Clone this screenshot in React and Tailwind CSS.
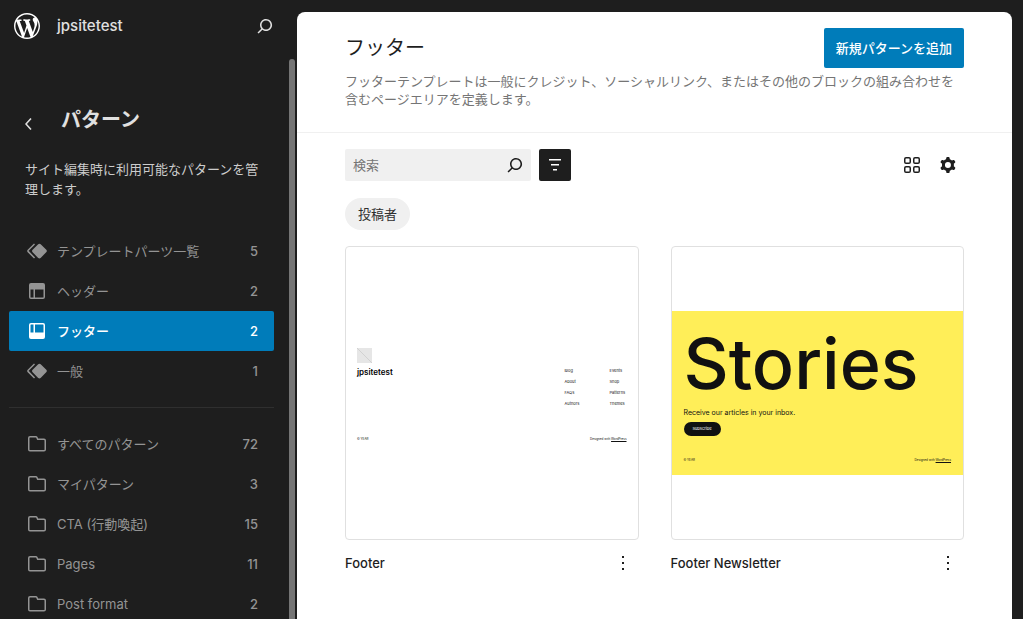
import React, { useState } from 'react';
import clsx from 'clsx';

const ICONS = {
  search:
    'M13 5c-3.3 0-6 2.7-6 6 0 1.4.5 2.7 1.3 3.7l-3.8 3.8 1.1 1.1 3.8-3.8c1 .8 2.3 1.3 3.7 1.3 3.3 0 6-2.7 6-6S16.3 5 13 5zm0 10.5c-2.5 0-4.5-2-4.5-4.5s2-4.5 4.5-4.5 4.5 2 4.5 4.5-2 4.5-4.5 4.5z',
  chevronLeft: 'M14.6 7l-1.2-1L8 12l5.4 6 1.2-1-4.6-5z',
  symbol:
    'M21.3 10.8l-5.6-5.6c-.7-.7-1.8-.7-2.5 0l-5.6 5.6c-.7.7-.7 1.8 0 2.5l5.6 5.6c.3.3.8.5 1.2.5s.9-.2 1.2-.5l5.6-5.6c.8-.7.8-1.9.1-2.5zm-17.6 1L10 5.5l-1-1-6.3 6.3c-.7.7-.7 1.8 0 2.5L9 19.5l1.1-1.1-6.3-6.3c-.2 0-.2-.2-.1-.3z',
  header:
    'M18.5 10.5H10v8h8a.5.5 0 00.5-.5v-7.5zm-10 0h-3V18a.5.5 0 00.5.5h2.5v-8zM6 4h12a2 2 0 012 2v12a2 2 0 01-2 2H6a2 2 0 01-2-2V6a2 2 0 012-2z',
  footer:
    'M18 5.5h-8v8h8.5V6a.5.5 0 00-.5-.5zm-9.5 8h-3V6a.5.5 0 01.5-.5h2.5v8zM6 4h12a2 2 0 012 2v12a2 2 0 01-2 2H6a2 2 0 01-2-2V6a2 2 0 012-2z',
  file: 'M12.848 8a1 1 0 01-.914-.594l-.723-1.63a.5.5 0 00-.447-.276H5a.5.5 0 00-.5.5v11.5a.5.5 0 00.5.5h14a.5.5 0 00.5-.5v-9A.5.5 0 0019 8h-6.152zm.612-1.5a.5.5 0 01-.462-.31l-.445-1.084A2 2 0 0010.763 4H5a2 2 0 00-2 2v11.5a2 2 0 002 2h14a2 2 0 002-2v-9a2 2 0 00-2-2h-5.54z',
  filter: 'M10 17.5h4V16h-4v1.5zM6 6v1.5h12V6H6zm2 6.5h8V11H8v1.5z',
  grid: 'M6 5.5h3a.5.5 0 01.5.5v3a.5.5 0 01-.5.5H6a.5.5 0 01-.5-.5V6a.5.5 0 01.5-.5zM4 6a2 2 0 012-2h3a2 2 0 012 2v3a2 2 0 01-2 2H6a2 2 0 01-2-2V6zm11-.5h3a.5.5 0 01.5.5v3a.5.5 0 01-.5.5h-3a.5.5 0 01-.5-.5V6a.5.5 0 01.5-.5zM13 6a2 2 0 012-2h3a2 2 0 012 2v3a2 2 0 01-2 2h-3a2 2 0 01-2-2V6zm5 8.5h-3a.5.5 0 00-.5.5v3a.5.5 0 00.5.5h3a.5.5 0 00.5-.5v-3a.5.5 0 00-.5-.5zM15 13a2 2 0 00-2 2v3a2 2 0 002 2h3a2 2 0 002-2v-3a2 2 0 00-2-2h-3zm-9 1.5h3a.5.5 0 01.5.5v3a.5.5 0 01-.5.5H6a.5.5 0 01-.5-.5v-3a.5.5 0 01.5-.5zM4 15a2 2 0 012-2h3a2 2 0 012 2v3a2 2 0 01-2 2H6a2 2 0 01-2-2v-3z',
  cog: 'M10.289 4.836A1 1 0 0111.275 4h1.306a1 1 0 01.987.836l.244 1.466c.787.26 1.503.679 2.108 1.218l1.393-.522a1 1 0 011.216.437l.653 1.13a1 1 0 01-.23 1.273l-1.148.944a6.025 6.025 0 010 2.435l1.149.946a1 1 0 01.23 1.272l-.653 1.13a1 1 0 01-1.216.437l-1.394-.522c-.605.54-1.32.958-2.108 1.218l-.244 1.466a1 1 0 01-.987.836h-1.306a1 1 0 01-.986-.836l-.244-1.466a5.995 5.995 0 01-2.108-1.218l-1.394.522a1 1 0 01-1.217-.436l-.653-1.131a1 1 0 01.23-1.272l1.149-.946a6.026 6.026 0 010-2.435l-1.148-.944a1 1 0 01-.23-1.272l.653-1.131a1 1 0 011.217-.437l1.393.522a5.994 5.994 0 012.108-1.218l.244-1.466zM14.929 12a3 3 0 11-6 0 3 3 0 016 0z',
  more: 'M13 19h-2v-2h2v2zm0-6h-2v-2h2v2zm0-6h-2V5h2v2z',
};

const TEMPLATE_PARTS = [
  { icon: 'symbol', label: 'テンプレートパーツ一覧', count: 5 },
  { icon: 'header', label: 'ヘッダー', count: 2 },
  { icon: 'footer', label: 'フッター', count: 2 },
  { icon: 'symbol', label: '一般', count: 1 },
];

const PATTERNS = [
  { icon: 'file', label: 'すべてのパターン', count: 72 },
  { icon: 'file', label: 'マイパターン', count: 3 },
  { icon: 'file', label: 'CTA (行動喚起)', count: 15 },
  { icon: 'file', label: 'Pages', count: 11 },
  { icon: 'file', label: 'Post format', count: 2 },
];

const FOOTER_LINKS = [
  ['Blog', 'About', 'FAQs', 'Authors'],
  ['Events', 'Shop', 'Patterns', 'Themes'],
];

const Icon = ({ name, className = 'h-6 w-6' }) => (
  <svg viewBox="0 0 24 24" className={clsx('shrink-0 fill-current', className)} aria-hidden="true">
    <path fillRule="evenodd" clipRule="evenodd" d={ICONS[name]} />
  </svg>
);

const WordPressLogo = () => (
  <svg viewBox="0 0 20 20" className="h-[26px] w-[26px] shrink-0 fill-white" aria-hidden="true">
    <path d="M20 10c0-5.51-4.49-10-10-10C4.48 0 0 4.49 0 10c0 5.52 4.48 10 10 10 5.51 0 10-4.48 10-10zM7.78 15.37L4.37 6.22c.55-.02 1.17-.08 1.17-.08.5-.06.44-1.13-.06-1.11 0 0-1.45.11-2.37.11-.18 0-.37 0-.58-.01C4.12 2.69 6.87 1.11 10 1.11c2.33 0 4.45.87 6.05 2.34-.68-.11-1.65.39-1.65 1.58 0 .74.45 1.36.9 2.1.35.61.55 1.36.55 2.46 0 1.49-1.4 5-1.4 5l-3.03-8.37c.54-.02.82-.17.82-.17.5-.05.44-1.25-.06-1.22 0 0-1.44.12-2.38.12-.87 0-2.33-.12-2.33-.12-.5-.03-.56 1.2-.06 1.22l.92.08 1.26 3.41zM17.41 10c.24-.64.74-1.87.43-4.25.7 1.29 1.05 2.71 1.05 4.25 0 3.29-1.73 6.24-4.4 7.78.97-2.59 1.94-5.2 2.92-7.78zM6.1 18.09C3.12 16.65 1.11 13.53 1.11 10c0-1.3.23-2.48.72-3.59C3.25 10.3 4.67 14.2 6.1 18.09zm4.03-6.63l2.58 6.98c-.86.29-1.76.45-2.71.45-.79 0-1.57-.11-2.29-.33.81-2.38 1.62-4.74 2.42-7.1z" />
  </svg>
);

const NavList = ({ items, active, onSelect }) => (
  <ul>
    {items.map((item) => {
      const isActive = item.label === active;
      return (
        <li key={item.label}>
          <a
            href="#"
            onClick={() => onSelect(item.label)}
            aria-current={isActive ? 'page' : undefined}
            className={clsx(
              'flex h-10 items-center gap-2 rounded-xs px-4',
              isActive ? 'bg-[#007cba] font-medium text-white' : 'text-[#949494]'
            )}
          >
            <Icon name={item.icon} />
            <span className="grow">{item.label}</span>
            <span className="font-medium">{item.count}</span>
          </a>
        </li>
      );
    })}
  </ul>
);

const Sidebar = () => {
  const [active, setActive] = useState('フッター');

  return (
    <aside className="flex w-[297px] shrink-0 flex-col">
      <div className="flex h-[59px] shrink-0 items-start pt-[10px] pr-5 pl-[14px]">
        <a href="#" className="flex h-8 grow items-center gap-[17px]">
          <WordPressLogo />
          <span className="text-[15px] font-medium text-[#e0e0e0]">jpsitetest</span>
        </a>
        <button type="button" aria-label="コマンドパレットを開く" className="flex h-8 items-center text-[#e0e0e0]">
          <Icon name="search" />
        </button>
      </div>
      <div className="flex min-h-0 grow">
        <div className="grow overflow-hidden pr-[15px] pl-[9px]">
          <div className="flex items-center gap-5 px-2 pt-[45px]">
            <button type="button" aria-label="戻る" className="flex h-8 w-6 items-end text-[#e0e0e0]">
              <Icon name="chevronLeft" />
            </button>
            <h1 className="text-xl leading-8 font-bold text-[#e0e0e0]">パターン</h1>
          </div>
          <p className="pt-[23px] pr-3 pl-4 leading-5 text-[#cccccc]">
            サイト編集時に利用可能なパターンを管理します。
          </p>
          <nav className="pt-8">
            <NavList items={TEMPLATE_PARTS} active={active} onSelect={setActive} />
            <hr className="my-4 border-[#2f2f2f]" />
            <NavList items={PATTERNS} active={active} onSelect={setActive} />
          </nav>
        </div>
        {/* scrollbar thumb */}
        <div className="mr-[2px] w-[6px] shrink-0 rounded-t-full bg-[#757575]" />
      </div>
    </aside>
  );
};

const Credits = () => (
  <div className="flex items-center justify-between text-[3px] leading-[6px]">
    <span>© YEAR</span>
    <span>
      Designed with <span className="underline">WordPress</span>
    </span>
  </div>
);

const FooterPreview = () => (
  <div className="w-full px-[11px] pt-1 text-[#111111]">
    <svg viewBox="0 0 15 15" className="h-[15px] w-[15px]" aria-hidden="true">
      <rect width="15" height="15" fill="#e6e6e6" />
      <path d="M0 0l15 15" stroke="#d2d2d2" strokeWidth="1" />
    </svg>
    <div className="flex items-start justify-between">
      <p className="pt-1 text-[8px] leading-[10px] font-semibold text-black">jpsitetest</p>
      <div className="grid grid-cols-[45px_17px] pt-[2px]">
        {FOOTER_LINKS.map((links) => (
          <ul key={links[0]} className="text-[4px] leading-[11px]">
            {links.map((link) => (
              <li key={link}>{link}</li>
            ))}
          </ul>
        ))}
      </div>
    </div>
    <div className="pt-[27px]">
      <Credits />
    </div>
  </div>
);

const NewsletterPreview = () => (
  <div className="w-full bg-[#ffee58] px-3 pt-[18px] pb-3 text-[#111111]">
    <p className="text-[70px] leading-[70px] font-medium">Stories</p>
    <p className="pt-[9px] text-[7px] leading-[10px]">Receive our articles in your inbox.</p>
    <p className="mt-1 mb-[21px] flex h-[14px] w-[37px] items-center justify-center rounded-full bg-[#111111] text-[4px] text-white">
      Subscribe
    </p>
    <Credits />
  </div>
);

const PatternCard = ({ title, children }) => (
  <article>
    <div className="flex aspect-square items-center overflow-hidden rounded-sm border border-[#e0e0e0]">
      {children}
    </div>
    <div className="flex items-center justify-between pt-[7px]">
      <h3 className="font-medium text-[#1e1e1e]">{title}</h3>
      <button type="button" aria-label="操作" className="flex h-8 w-8 items-center justify-center">
        <Icon name="more" />
      </button>
    </div>
  </article>
);

export default function App() {
  const [search, setSearch] = useState('');

  return (
    <div className="flex h-screen overflow-hidden bg-[#1e1e1e] font-[Inter,'Noto_Sans_CJK_JP',sans-serif] text-[13px] leading-5">
      <Sidebar />
      <main className="mt-3 mr-[11px] min-w-0 grow overflow-hidden rounded-t-lg bg-white text-[#1e1e1e]">
        <header className="border-b border-[#f0f0f0] px-12 pt-4 pb-6">
          <div className="flex h-10 items-center justify-between">
            <h2 className="text-xl font-normal">フッター</h2>
            <button type="button" className="h-10 rounded-xs bg-[#007cba] px-3 font-medium text-white">
              新規パターンを追加
            </button>
          </div>
          <p className="pt-1 leading-[18px] text-[#757575]">
            フッターテンプレートは一般にクレジット、ソーシャルリンク、またはその他のブロックの組み合わせを含むページエリアを定義します。
          </p>
        </header>
        <section className="px-12 pt-4">
          <div className="flex items-center gap-2">
            <label className="flex h-8 w-[186px] items-center rounded-xs bg-[#f0f0f0] pr-1 pl-2">
              <input
                type="search"
                aria-label="検索"
                placeholder="検索"
                value={search}
                onChange={(event) => setSearch(event.target.value)}
                className="min-w-0 grow bg-transparent outline-none placeholder:text-[#757575]"
              />
              <Icon name="search" />
            </label>
            <button
              type="button"
              aria-label="フィルター"
              className="flex h-8 w-8 items-center justify-center rounded-xs bg-[#1e1e1e] text-white"
            >
              <Icon name="filter" />
            </button>
            <div className="ml-auto flex gap-1">
              <button type="button" aria-label="レイアウト" className="flex h-8 w-8 items-center justify-center">
                <Icon name="grid" />
              </button>
              <button type="button" aria-label="表示オプション" className="flex h-8 w-8 items-center justify-center">
                <Icon name="cog" />
              </button>
            </div>
          </div>
          <button type="button" className="mt-[17px] flex h-8 items-center rounded-full bg-[#f0f0f0] px-[13px] text-[#2f2f2f]">
            投稿者
          </button>
          <div className="grid grid-cols-2 gap-8 pt-4">
            <PatternCard title="Footer">
              <FooterPreview />
            </PatternCard>
            <PatternCard title="Footer Newsletter">
              <NewsletterPreview />
            </PatternCard>
          </div>
        </section>
      </main>
    </div>
  );
}
